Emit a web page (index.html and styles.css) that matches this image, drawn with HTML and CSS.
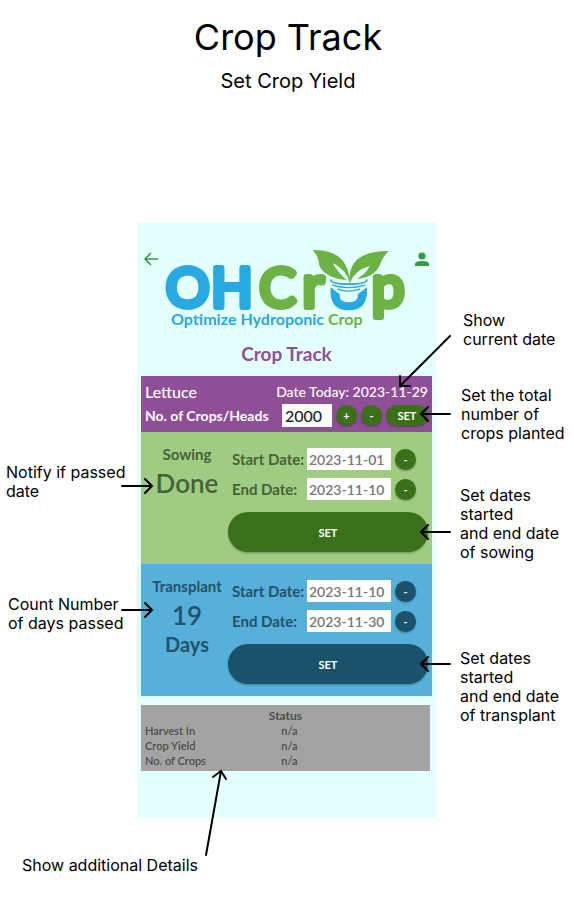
FILE: index.html
```html
<!DOCTYPE html>
<html lang="en">
<head>
<meta charset="utf-8">
<meta name="viewport" content="width=device-width, initial-scale=1">
<title>Crop Track</title>
<link rel="stylesheet" href="styles.css">
</head>
<body>
<header class="intro">
  <h1>Crop Track</h1>
  <p>Set Crop Yield</p>
</header>
<div class="stage">
  <main class="phone">
    <div class="topbar">
      <a class="icon-link" href="#" aria-label="Back">
        <svg width="16" height="16" viewBox="0 0 16 16" fill="none" stroke="#389a40" stroke-width="1.6"><path d="M15 8H2M8 2L2 8l6 6"/></svg>
      </a>
      <svg class="logo" viewBox="0 0 244 82" role="img" aria-label="OHCrop, Optimize Hydroponic Crop">
        <g class="logo-name">
          <text class="blue" x="2" y="58">O</text>
          <text class="blue" x="47" y="58">H</text>
          <text class="green" x="95" y="58">C</text>
          <text class="green small" x="138" y="58">r</text>
          <text class="green small" x="207" y="58">p</text>
        </g>
        <path d="M166 38Q164 61 184 61Q204 61 202 38L193 45Q194 53 184 53Q174 53 175 45Z" fill="#29a9e1"/>
        <path d="M165 30Q167 39 175 43Q184 48 193 43Q201 39 203 30Z" fill="#e5ffff"/>
        <g fill="none" stroke="#29a9e1" stroke-linecap="round">
          <path d="M166 31Q167 35 184 35Q201 35 202 31" stroke-width="1.8"/>
          <path d="M168 36Q184 41 200 36M173 40Q184 44 195 40" stroke-width="1.3"/>
        </g>
        <path d="M148 1Q184 0 185 34Q182 21 168 14Q172 22 182 31Q169 30 162 25Q154 20 154 12Q153 6 148 1Z" fill="#6db244"/>
        <path d="M224 2Q218 7 215 16Q210 28 192 30Q201 25 205 17Q190 21 185 34Q183 27 188 16Q196 2 224 2Z" fill="#6db244"/>
        <text class="tagline blue" x="7" y="76">Optimize Hydroponic <tspan class="green">Crop</tspan></text>
      </svg>
      <a class="icon-link" href="#" aria-label="Account">
        <svg width="16" height="16" viewBox="0 0 16 16" fill="#389a40"><circle cx="8" cy="5" r="3.6"/><path d="M1 15v-2q0-3 7-3t7 3v2z"/></svg>
      </a>
    </div>
    <h2>Crop Track</h2>
    <form class="crop">
      <div class="line">
        <span class="name">Lettuce</span>
        <span class="today">Date Today: 2023-11-29</span>
      </div>
      <div class="line">
        <label class="count-label" for="heads">No. of Crops/Heads</label>
        <input class="count" id="heads" value="2000">
        <button class="round" type="button">+</button>
        <button class="round" type="button">-</button>
        <button class="pill" type="button">SET</button>
      </div>
    </form>
    <form class="stage-card sowing">
      <div class="state">
        <h3>Sowing</h3>
        <p class="big">Done</p>
      </div>
      <div class="dates">
        <label for="sow-start">Start Date:</label>
        <input id="sow-start" value="2023-11-01">
        <button class="round" type="button">-</button>
        <label for="sow-end">End Date:</label>
        <input id="sow-end" value="2023-11-10">
        <button class="round" type="button">-</button>
        <button class="set" type="button">SET</button>
      </div>
    </form>
    <form class="stage-card transplant">
      <div class="state">
        <h3>Transplant</h3>
        <p class="big">19</p>
        <p class="unit">Days</p>
      </div>
      <div class="dates">
        <label for="tr-start">Start Date:</label>
        <input id="tr-start" value="2023-11-10">
        <button class="round" type="button">-</button>
        <label for="tr-end">End Date:</label>
        <input id="tr-end" value="2023-11-30">
        <button class="round" type="button">-</button>
        <button class="set" type="button">SET</button>
      </div>
    </form>
    <table class="status">
      <thead><tr><td></td><th scope="col">Status</th><td></td></tr></thead>
      <tbody>
        <tr><th scope="row">Harvest In</th><td>n/a</td><td></td></tr>
        <tr><th scope="row">Crop Yield</th><td>n/a</td><td></td></tr>
        <tr><th scope="row">No. of Crops</th><td>n/a</td><td></td></tr>
      </tbody>
    </table>
  </main>
  <svg class="arrows" width="574" height="702" viewBox="0 222 574 702" aria-hidden="true">
    <path d="M450 336L400 386M400 376V386H410"/>
    <path d="M450 414H421M428 407L421 414L428 421"/>
    <path d="M450 532H421M428 525L421 532L428 539"/>
    <path d="M450 664H421M428 657L421 664L428 671"/>
    <path d="M122 486H152M145 479L152 486L145 493"/>
    <path d="M122 610H152M145 603L152 610L145 617"/>
    <path d="M206 855L221 771M213 777L221 771L226 779"/>
  </svg>
  <p class="note note-date">Show<br>current date</p>
  <p class="note note-total">Set the total<br>number of<br>crops planted</p>
  <p class="note note-sowing">Set dates<br>started<br>and end date<br>of sowing</p>
  <p class="note note-transplant">Set dates<br>started<br>and end date<br>of transplant</p>
  <p class="note note-passed">Notify if passed<br>date</p>
  <p class="note note-days">Count Number<br>of days passed</p>
  <p class="note note-details">Show additional Details</p>
</div>
</body>
</html>
```
FILE: styles.css
```css
* { box-sizing: border-box; }
body { margin: 0; background: #fff; color: #000; font-family: Inter, sans-serif; }
h1, h2, h3, p { margin: 0; }
button, input { font: inherit; border: 0; margin: 0; padding: 0; min-width: 0; }

.intro { text-align: center; padding: 15px 0 0 2px; height: 222px; }
.intro h1 { font-size: 36px; font-weight: 400; line-height: 44px; }
.intro p { font-size: 20px; line-height: 24px; margin-top: 10px; }

/* Canvas that holds the mock-up and its callouts */
.stage { position: relative; max-width: 574px; margin: 0 auto; min-height: 702px; }
.phone {
  width: 299px;
  min-height: 596px;
  margin-left: 137px;
  padding: 27px 4px 0;
  background: #e5ffff;
  font-family: Lato, sans-serif;
}

.topbar { display: flex; gap: 5px; align-items: flex-start; padding: 0 2px; }
.icon-link { flex: none; width: 16px; height: 16px; margin-top: 2px; }
.icon-link svg { display: block; }
.logo { flex: 1; min-width: 0; display: block; overflow: visible; }
.logo-name { font-size: 54px; stroke-width: 6px; stroke-linejoin: round; }
.logo-name .small { font-size: 58px; }
.logo .blue { fill: #29a9e1; }
.logo .green { fill: #6db244; }
.logo-name .blue { stroke: #29a9e1; }
.logo-name .green { stroke: #6db244; }
.tagline { font-size: 16px; font-weight: 700; }
h2 { color: #8f4f96; font-size: 19px; line-height: 24px; text-align: center; margin: 11px 0 10px; }

.crop { background: #8f4f96; color: #fff; font-weight: 700; padding: 3px 4px 5px; width: 291px; height: 56px; }
.line { display: flex; align-items: center; gap: 4px; height: 24px; }
.name { font-size: 16px; font-weight: 500; }
.today { font-size: 14px; font-weight: 500; margin-left: auto; }
.count-label { font-size: 14px; flex: 1; }
.count { width: 50px; height: 23px; padding: 0 3px; font-size: 16px; font-weight: 500; background: #fff; color: #222; }

.round, .pill, .set { background: #3b701b; color: #fff; font-size: 11px; font-weight: 700; box-shadow: 0 1px 2px rgba(0, 0, 0, .3); }
.round { flex: none; width: 21px; height: 21px; border-radius: 50%; }
.pill { width: 42px; height: 21px; border-radius: 11px; }

.stage-card { display: grid; grid-template-columns: 83px 1fr; padding: 14px 4px 0; width: 291px; height: 132px; }
.sowing { background: #9fcc82; color: #456339; }
.transplant { background: #56b0d9; color: #22536b; }
.state { text-align: center; padding-left: 1px; }
.state h3 { font-size: 15px; line-height: 16px; }
.big { font-size: 26px; line-height: 32px; margin-top: 5px; font-weight: 600; }
.unit { font-size: 20px; line-height: 26px; font-weight: 700; }
.dates { display: grid; grid-template-columns: 71px 84px 21px; grid-template-rows: 26px 26px 40px; gap: 4px; align-items: center; align-content: start; padding-left: 4px; }
.dates label { font-size: 15px; font-weight: 700; white-space: nowrap; }
.dates input { width: 84px; height: 22px; padding: 0 2px; font-size: 14px; font-weight: 600; background: #fff; color: #777; }
.dates .set { grid-column: 1 / -1; width: 200px; height: 40px; margin: 6px 0 0 -4px; align-self: start; border-radius: 20px; }
.transplant .round, .transplant .set { background: #1b526b; }

.status { width: 289px; margin-top: 9px; padding: 3px 4px; border-spacing: 0; table-layout: fixed; background: #a3a3a3; color: #4d4d4d; font-size: 11px; font-weight: 600; text-align: center; }
.status td, .status th { padding: 0; height: 15px; line-height: 15px; }
.status tbody td:nth-child(2) { padding-left: 8px; }
.status thead th { font-weight: 700; font-size: 12px; }
.status tbody th { text-align: left; font-weight: 600; }

.arrows { position: absolute; left: 0; top: 0; fill: none; stroke: #000; stroke-width: 2; stroke-linecap: round; pointer-events: none; }
.note { position: absolute; font-size: 16px; line-height: 19px; white-space: nowrap; }
.note-date { left: 463px; top: 89px; }
.note-total { left: 461px; top: 164px; }
.note-sowing { left: 460px; top: 264px; }
.note-transplant { left: 460px; top: 427px; }
.note-passed { left: 6px; top: 241px; }
.note-days { left: 8px; top: 373px; }
.note-details { left: 22px; top: 634px; }
```
